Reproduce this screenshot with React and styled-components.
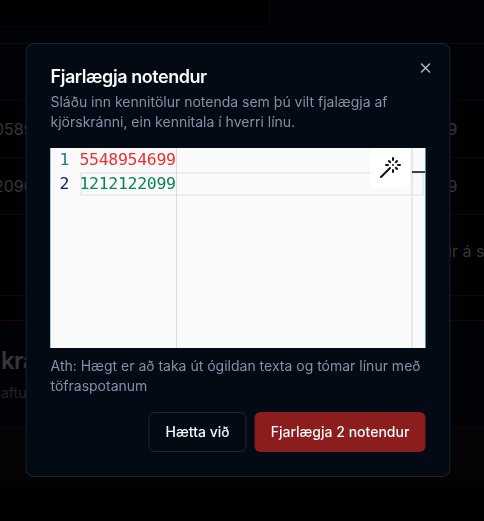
import React from 'react';
import styled, { createGlobalStyle } from 'styled-components';
import { Wand, X } from 'lucide-react';

const GlobalStyle = createGlobalStyle`
  * { box-sizing: border-box; }
  body { margin: 0; background: #000103; overflow: hidden; font-family: Inter, sans-serif; -webkit-font-smoothing: antialiased; }
  h2, h3, p { margin: 0; }
  button { font-family: inherit; }
`;

const Page = styled.main`
  height: 521px;
  overflow: hidden;
  display: flex;
  flex-direction: column;
  color: #353638;
  background: #000102;
`;

const SearchArea = styled.div`
  flex: 0 0 43px;
  background: #010206;
`;

const SearchBox = styled.div`
  width: 270px;
  height: 27px;
  background: #000102;
  border: 1px solid #07090d;
  border-width: 0 1px 1px 0;
  border-bottom-right-radius: 6px;
`;

const Row = styled.div`
  flex: 0 0 ${({ $height }) => $height}px;
  display: flex;
  align-items: center;
  justify-content: space-between;
  border-top: 1px solid #090a0d;
  background: ${({ $head }) => ($head ? '#010206' : '#000102')};
  font-size: 16px;
  white-space: nowrap;
`;

const StartCell = styled.span`
  margin-left: -6px;
`;

const EndCell = styled.span`
  width: 36px;
  padding-bottom: 8px;
`;

const NumberCell = styled.span`
  margin-right: 26.5px;
`;

const DangerZone = styled.section`
  flex: 0 0 161px;
  display: flex;
  flex-direction: column;
  border-top: 1px solid #180408;
  background: #010206;
`;

const DangerHeading = styled.h3`
  height: 26px;
  margin-top: 27px;
  padding-left: 1px;
  font-size: 24px;
  line-height: 26px;
  font-weight: 600;
  letter-spacing: -0.6px;
`;

const DangerText = styled.p`
  margin-top: 9px;
  padding-left: 1px;
  font-size: 14px;
  line-height: 20px;
  color: #212326;
`;

const DangerFooter = styled.div`
  margin-top: auto;
  height: 54px;
  background: #060304;
  border-top: 1px solid #0c0405;
`;

const Dialog = styled.div`
  position: fixed;
  left: 238px;
  top: 260px;
  width: 425px;
  height: 434px;
  transform: translate(-50%, -50%);
  will-change: transform;
  display: flex;
  flex-direction: column;
  padding: 24px;
  border: 1px solid #1c2739;
  border-radius: 8px;
  background: #030a14;
`;

const CloseButton = styled.button`
  position: absolute;
  top: 16px;
  right: 16px;
  display: flex;
  padding: 0;
  border: 0;
  background: none;
  color: #b1b4b9;
`;

const Title = styled.h2`
  font-size: 18px;
  line-height: 18px;
  font-weight: 600;
  letter-spacing: -0.45px;
  color: #f8fafc;
`;

const Muted = styled.p`
  margin-top: ${({ $gap }) => $gap}px;
  font-size: 14px;
  line-height: 20px;
  color: #8291a7;
`;

const Editor = styled.div`
  position: relative;
  flex: 0 0 200px;
  margin: 16px -1px 0 0;
  transform: translateX(-0.5px);
  display: flex;
  overflow: hidden;
  border: 1px solid #4a8fc4;
  border-width: 0 1px;
  border-left-color: #9cc8e6;
  background: #fafafa;
  font: 16.5px/24px 'DejaVu Sans Mono', monospace;
  letter-spacing: -0.31px;
`;

const LineNumbers = styled.div`
  width: 18px;
  margin-right: 11px;
  display: flex;
  flex-direction: column;
  align-items: flex-end;
`;

const LineNumber = styled.span`
  color: ${({ $active }) => ($active ? '#0b216f' : '#237893')};
`;

const CodeArea = styled.div`
  flex: 1;
  margin-right: 1px;
`;

const CodeLine = styled.div`
  height: 24px;
  display: flex;
  align-items: center;
  text-indent: -0.5px;
  color: ${({ $valid }) => ($valid ? '#098658' : '#f03030')};
  box-shadow: ${({ $valid }) => ($valid ? 'inset 0 0 0 2px #ececec' : 'none')};
`;

const LengthRuler = styled.div`
  position: absolute;
  top: 0;
  left: 125px;
  width: 1px;
  height: 200px;
  background: #dcdcdc;
`;

const OverviewRuler = styled.div`
  position: absolute;
  top: 0;
  right: 0;
  width: 14px;
  height: 200px;
  border-left: 2px solid #e8e8e8;
`;

const CursorMark = styled.div`
  margin: 23px 0 0 -1px;
  height: 2px;
  background: #424242;
`;

const WandButton = styled.button`
  position: absolute;
  top: 0;
  right: 15.5px;
  width: 40px;
  height: 40px;
  display: flex;
  align-items: center;
  justify-content: center;
  padding: 0;
  border: 0;
  border-radius: 6px;
  background: #fff;
  color: #111;
`;

const Actions = styled.div`
  margin-top: 16px;
  display: flex;
  justify-content: flex-end;
  gap: 8px;
`;

const Button = styled.button`
  width: ${({ $danger }) => ($danger ? 171 : 98)}px;
  height: 40px;
  padding: 0;
  border: ${({ $danger }) => ($danger ? '0' : '1px solid #1c2739')};
  border-radius: 6px;
  background: ${({ $danger }) => ($danger ? '#8c1d1d' : 'transparent')};
  color: #f8fafc;
  font-size: 14px;
  line-height: 20px;
  font-weight: 500;
  white-space: nowrap;
`;

export default function App() {
  return (
    <>
      <GlobalStyle />
      <Page>
        <SearchArea><SearchBox /></SearchArea>
        <Row $height={57} $head />
        <Row $height={57}><StartCell>0589</StartCell><NumberCell>9</NumberCell></Row>
        <Row $height={57}><StartCell>2090</StartCell><NumberCell>9</NumberCell></Row>
        <Row $height={81}><StartCell /><EndCell>ir á s</EndCell></Row>
        <Row $height={25} />
        <DangerZone>
          <DangerHeading>krá</DangerHeading>
          <DangerText>aftur</DangerText>
          <DangerFooter />
        </DangerZone>
      </Page>
      <Dialog role="dialog" aria-label="Fjarlægja notendur">
        <Title>Fjarlægja notendur</Title>
        <Muted $gap={6}>Sláðu inn kennitölur notenda sem þú vilt fjalægja af kjörskránni, ein kennitala í hverri línu.</Muted>
        <Editor>
          <LineNumbers>
            <LineNumber>1</LineNumber>
            <LineNumber $active>2</LineNumber>
          </LineNumbers>
          <CodeArea>
            <CodeLine>5548954699</CodeLine>
            <CodeLine $valid>1212122099</CodeLine>
          </CodeArea>
          <LengthRuler />
          <OverviewRuler><CursorMark /></OverviewRuler>
          <WandButton aria-label="Töfrasproti"><Wand size={24} /></WandButton>
        </Editor>
        <Muted $gap={8}>Ath: Hægt er að taka út ógildan texta og tómar línur með töfraspotanum</Muted>
        <Actions>
          <Button>Hætta við</Button>
          <Button $danger>Fjarlægja 2 notendur</Button>
        </Actions>
        <CloseButton aria-label="Loka"><X size={16} strokeWidth={2.3} /></CloseButton>
      </Dialog>
    </>
  );
}
